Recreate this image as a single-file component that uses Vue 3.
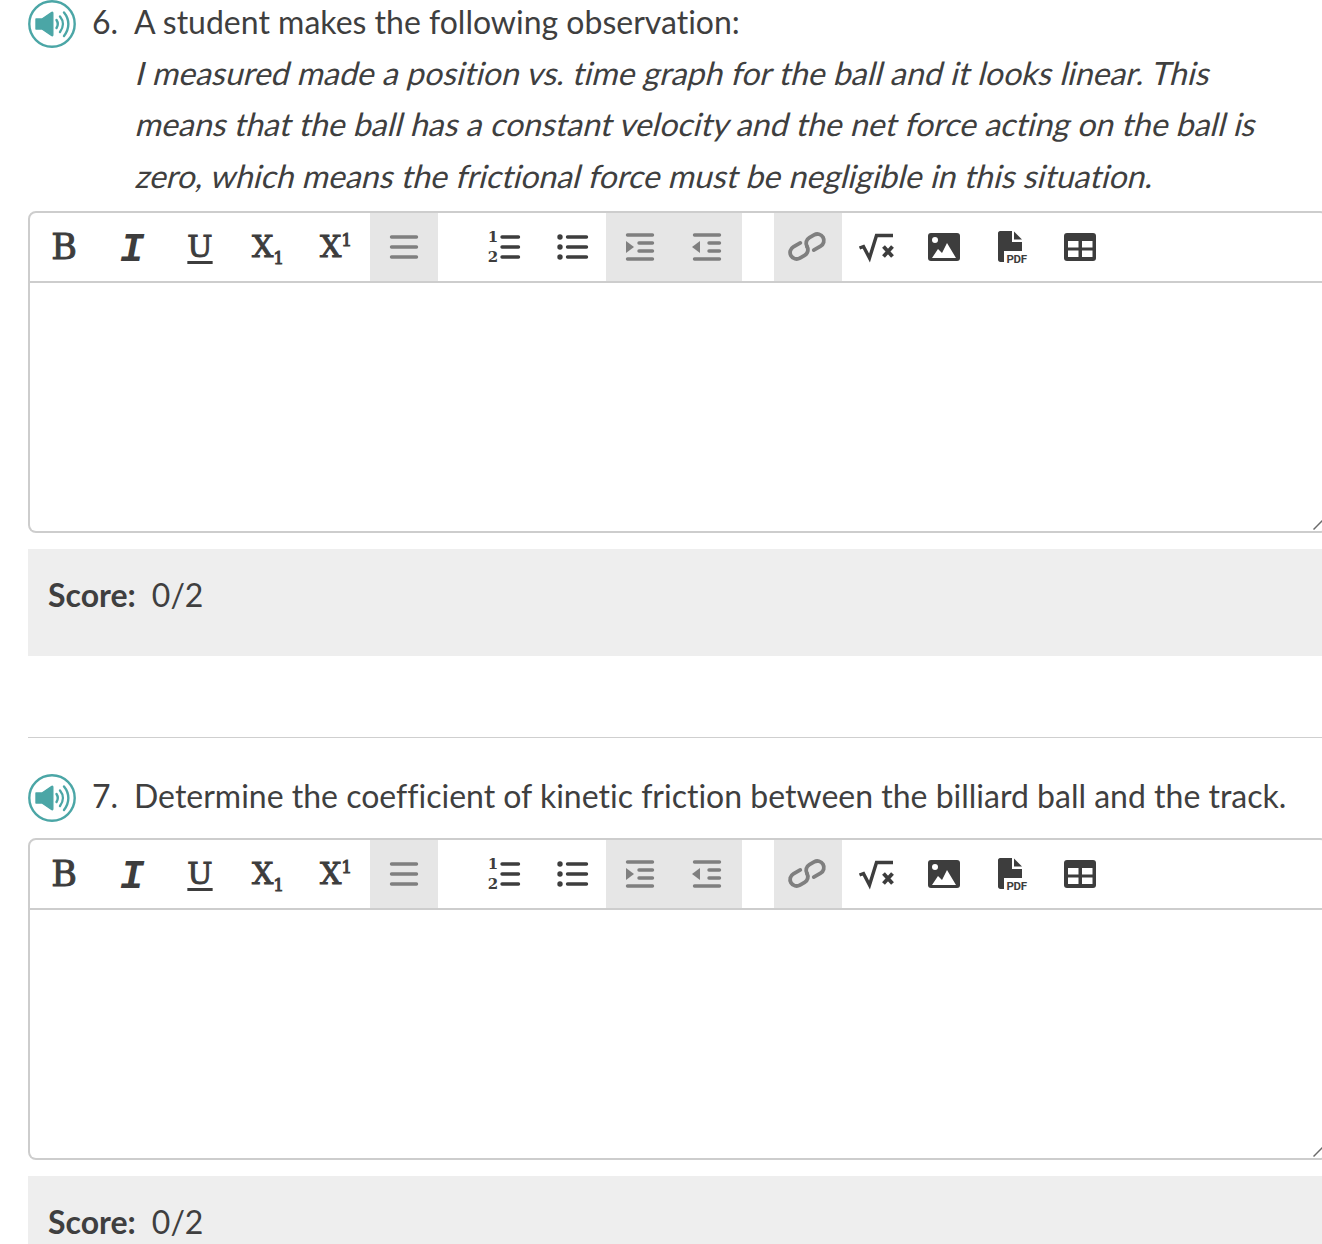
<script setup>
const questions = [
  {
    id: 6,
    text: 'A student makes the following observation:',
    quote: [
      'I measured made a position vs. time graph for the ball and it looks linear. This',
      'means that the ball has a constant velocity and the net force acting on the ball is',
      'zero, which means the frictional force must be negligible in this situation.',
    ],
  },
  {
    id: 7,
    text: 'Determine the coefficient of kinetic friction between the billiard ball and the track.',
  },
]

// toolbar order, gaps are handled with the .spaced class
const tools = [
  { name: 'bold' }, { name: 'italic' }, { name: 'underline' }, { name: 'sub' }, { name: 'sup' },
  { name: 'justify', off: true },
  { name: 'ol', spaced: true }, { name: 'ul' },
  { name: 'indent', off: true }, { name: 'outdent', off: true },
  { name: 'link', off: true, spaced: true },
  { name: 'sqrt' }, { name: 'image' }, { name: 'pdf' }, { name: 'table' },
]
</script>

<template>
  <div class="page">
    <section v-for="q in questions" :key="q.id" class="question">
      <div class="prompt">
        <svg class="speaker" width="48" height="48" viewBox="0 0 48 48">
          <circle cx="24" cy="24" r="22.7" fill="none" stroke="#4ba6a6" stroke-width="2.4" />
          <path d="M8 19h6L23.500 12.500c.8-.5 1.300-.2 1.300 .8v21.400c0 1-.5 1.300-1.300 .8L14 29H8z" fill="#4ba6a6" stroke="#4ba6a6" stroke-width="1.400" stroke-linejoin="round" />
          <path d="M28.500 20c1.600 2.500 1.600 5.500 0 8M32 16.500c3.800 4.500 3.800 10.500 0 15.500M36 12.500c5.800 7 5.800 16 0 23.500" fill="none" stroke="#4ba6a6" stroke-width="2.400" stroke-linecap="round" />
        </svg>
        <span class="number">{{ q.id }}.</span>
        <div class="body">
          <p class="line">{{ q.text }}</p>
          <p v-for="row in q.quote" :key="row" class="line quote">{{ row }}</p>
        </div>
      </div>

      <div class="editor">
        <div class="toolbar">
          <button
            v-for="tool in tools"
            :key="tool.name"
            type="button"
            class="tool"
            :class="{ off: tool.off, spaced: tool.spaced }"
          >
            <span v-if="tool.name === 'bold'" class="glyph">B</span>
            <span v-else-if="tool.name === 'italic'" class="glyph slanted">I</span>
            <span v-else-if="tool.name === 'underline'" class="glyph under">U</span>
            <span v-else-if="tool.name === 'sub'" class="glyph script">X<sub>1</sub></span>
            <span v-else-if="tool.name === 'sup'" class="glyph script">X<sup>1</sup></span>

            <svg v-else width="68" height="68" viewBox="0 0 68 68" class="icon">
              <g v-if="tool.name === 'justify'" stroke="currentColor" stroke-width="3.400" stroke-linecap="round">
                <path d="M21.500 24H46.500M21.500 34H46.500M21.500 44H46.500" />
              </g>
              <g v-else-if="tool.name === 'ol'">
                <path d="M32 24H48.500M32 34H48.500M32 44H48.500" stroke="currentColor" stroke-width="3.400" stroke-linecap="round" />
                <text x="23" y="29" class="tiny">1</text>
                <text x="23" y="49" class="tiny">2</text>
              </g>
              <g v-else-if="tool.name === 'ul'">
                <circle cx="22" cy="24" r="2.700" fill="currentColor" />
                <circle cx="22" cy="34" r="2.700" fill="currentColor" />
                <circle cx="22" cy="44" r="2.700" fill="currentColor" />
                <path d="M29.500 24H48.500M29.500 34H48.500M29.500 44H48.500" stroke="currentColor" stroke-width="3.400" stroke-linecap="round" />
              </g>
              <g v-else-if="tool.name === 'indent'">
                <path d="M21.500 22H46.500M33 30H46.500M33 38H46.500M21.500 46H46.500" stroke="currentColor" stroke-width="3.400" stroke-linecap="round" />
                <path d="M20 28L28 34L20 40z" fill="currentColor" />
              </g>
              <g v-else-if="tool.name === 'outdent'">
                <path d="M20.500 22H45.500M35 30H45.500M35 38H45.500M20.500 46H45.500" stroke="currentColor" stroke-width="3.400" stroke-linecap="round" />
                <path d="M18 34L26 28V40z" fill="currentColor" />
              </g>
              <g v-else-if="tool.name === 'link'" transform="rotate(-30 33 33.500)" fill="none" stroke="currentColor" stroke-width="3.800" stroke-linecap="round">
                <path d="M29 27H21A6.500 6.500 0 0 0 21 40H26.500A6.500 6.500 0 0 0 33 33.500" />
                <path d="M37 40H45A6.500 6.500 0 0 0 45 27H39.500A6.500 6.500 0 0 0 33 33.500" />
              </g>
              <g v-else-if="tool.name === 'sqrt'">
                <path d="M17.500 35L21.500 33.500L27.500 45L34.500 22.500H51" fill="none" stroke="currentColor" stroke-width="3.400" />
                <path d="M41.500 33.500L50.500 43.500M50.500 33.500L41.500 43.500" stroke="currentColor" stroke-width="3.800" />
              </g>
              <g v-else-if="tool.name === 'image'">
                <rect x="18" y="20" width="32" height="28" rx="3" fill="currentColor" />
                <circle cx="25" cy="27" r="3" fill="#fff" />
                <path d="M22 45L28 36L32 40L37 30L46 45z" fill="#fff" />
              </g>
              <g v-else-if="tool.name === 'pdf'">
                <path d="M22 18H34V29H44V49H22.500C21 49 20 48 20 46.500V20C20 19 21 18 22 18z" fill="currentColor" />
                <path d="M36 18.500L44 26.500H36z" fill="currentColor" />
                <rect x="26" y="38" width="24" height="14" fill="#fff" />
                <text x="28.500" y="50" class="pdf">PDF</text>
              </g>
              <g v-else-if="tool.name === 'table'">
                <rect x="18" y="20" width="32" height="28" rx="3" fill="currentColor" />
                <path d="M22 28H32.500V34.500H22zM36 28H46.500V34.500H36zM22 37.500H32.500V44H22zM36 37.500H46.500V44H36z" fill="#fff" />
              </g>
            </svg>
          </button>
        </div>
        <textarea class="answer"></textarea>
        <svg class="grip" width="10" height="10" viewBox="0 0 10 10">
          <path d="M.5 9.500L9.500 .5" stroke="#6a6a6a" stroke-width="1.500" />
        </svg>
      </div>

      <div class="score"><strong>Score:</strong><span>0/2</span></div>
    </section>
  </div>
</template>

<style>
html, body { height: 1244px; overflow: hidden; background: #fff; }
</style>

<style scoped>
.page {
  width: 1300px;
  margin-top: -4px;
  padding-left: 28px;
  font-family: Lato, sans-serif;
  font-size: 32px;
  font-variant-ligatures: none;
  color: #3f3f3f;
}

.question + .question {
  margin-top: 81px;
  padding-top: 32px;
  border-top: 1px solid #cfcfcf;
}

.prompt { display: flex; align-items: flex-start; min-height: 59px; }
.speaker { flex: none; margin-top: 4px; }
.number { flex: none; width: 42px; margin-left: 16px; line-height: 51.500px; }
.body { flex: 1; min-width: 0; }
.line { margin: 0; line-height: 51.500px; white-space: nowrap; }
/* the reference slants the upright face instead of using the real italic */
.quote { transform: translate(1px, -0.75px) skewX(-14deg); transform-origin: 0 68%; }

.editor { position: relative; margin-top: 9px; }
.grip { position: absolute; right: 5px; bottom: 3px; }

.toolbar {
  display: flex;
  height: 68px;
  border: 2px solid #cdcdcd;
  border-radius: 8px 8px 0 0;
}

.tool {
  flex: none;
  width: 68px;
  height: 68px;
  padding: 0;
  border: 0;
  background: none;
  color: #3d3d3d;
  display: flex;
  align-items: center;
  justify-content: center;
}
.tool.off { background: #e6e6e6; color: #7f7f7f; }
.tool.spaced { margin-left: 32px; }
.icon { display: block; }

.glyph {
  font-family: "DejaVu Serif", serif;
  font-size: 35px;
  line-height: 1;
  -webkit-text-stroke: 1px currentColor;
}
.slanted {
  margin-top: 6px;
  font-family: "Liberation Mono", monospace;
  font-weight: 700;
  font-style: italic;
  font-size: 41px;
  -webkit-text-stroke: 0;
}
.under { text-decoration: underline; text-underline-offset: 4px; text-decoration-thickness: 3px; font-size: 30px; }
.script { font-size: 30px; }
.script sub, .script sup { font-size: 17px; line-height: 0; }

.tiny { font: 700 15px "DejaVu Serif", serif; fill: currentColor; text-anchor: middle; }
.pdf { font: 700 11.500px "Roboto", sans-serif; fill: currentColor; letter-spacing: -0.3px; }

.answer {
  display: block;
  width: 100%;
  height: 250px;
  box-sizing: border-box;
  margin: 0;
  padding: 8px;
  border: 2px solid #cdcdcd;
  border-top: 0;
  border-radius: 0 0 8px 8px;
  outline: none;
  resize: none;
  background: #fff;
}

.score {
  display: flex;
  gap: 16px;
  align-items: flex-start;
  height: 107px;
  box-sizing: border-box;
  padding: 26px 0 0 20px;
  margin-top: 16px;
  background: #eeeeee;
}
.score strong { font-weight: 700; }
</style>
